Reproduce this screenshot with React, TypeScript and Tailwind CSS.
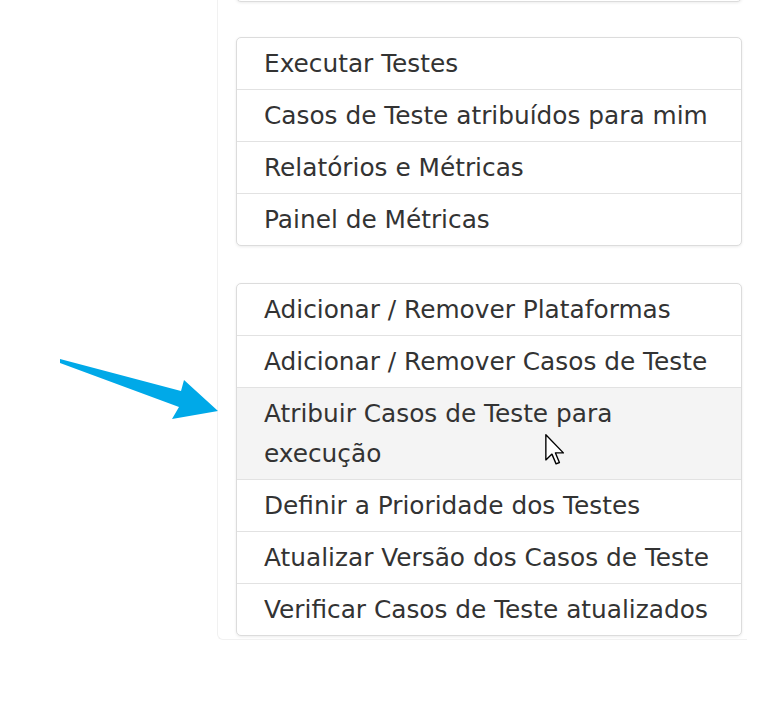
import React from 'react'

const TOP_ITEMS = [
  'Executar Testes',
  'Casos de Teste atribuídos para mim',
  'Relatórios e Métricas',
  'Painel de Métricas',
]

const PLAN_ITEMS = [
  'Adicionar / Remover Plataformas',
  'Adicionar / Remover Casos de Teste',
  'Atribuir Casos de Teste para execução',
  'Definir a Prioridade dos Testes',
  'Atualizar Versão dos Casos de Teste',
  'Verificar Casos de Teste atualizados',
]

function MenuCard({ items, hovered }: { items: string[]; hovered?: number }) {
  return (
    <div className="w-[506px] bg-white border border-[#dcdcdc] rounded-[5px] shadow-[0_1px_3px_rgba(0,0,0,0.08)] overflow-hidden">
      {items.map((label, i) => (
        <div
          key={label}
          className={`pl-[27px] pr-[18px] py-[5.5px] leading-[40px] text-[24.8px] text-[#333] ${i > 0 ? 'border-t border-[#e2e2e2]' : ''} ${hovered === i ? 'bg-[#f4f4f4]' : ''}`}
        >
          {label}
        </div>
      ))}
    </div>
  )
}

export default function App() {
  return (
    <div className="relative w-[760px] h-[706px] overflow-hidden bg-white font-['DejaVu_Sans',sans-serif]">
      <div className="ml-[217px] w-[530px] pb-[3px] border-l border-b border-[#f1f1f1] rounded-bl-md">
        {/* bottom of the card above */}
        <div className="ml-[18px] -mt-[38px] w-[506px] h-[40px] bg-white border border-[#dcdcdc] rounded-[5px] shadow-[0_1px_3px_rgba(0,0,0,0.08)]" />
        <div className="ml-[18px] mt-[35px]">
          <MenuCard items={TOP_ITEMS} />
        </div>
        <div className="ml-[18px] mt-[37px]">
          <MenuCard items={PLAN_ITEMS} hovered={2} />
        </div>
      </div>

      {/* blue pointer arrow */}
      <svg className="absolute left-0 top-0" width="760" height="706" viewBox="0 0 760 706">
        <polygon points="60,359 181,391 184,380 218,411 172,419 179,407 60,363" fill="#00a9e8" />
      </svg>

      {/* mouse cursor */}
      <svg className="absolute left-[545px] top-[434px]" width="20" height="32" viewBox="0 0 13 21">
        <path d="M0.5,0.5 L0.5,17 L4.5,13.2 L7.2,19.6 L9.4,18.7 L6.8,12.4 L12,12.4 Z" fill="#fff" stroke="#000" strokeWidth="0.9" strokeLinejoin="round" />
      </svg>
    </div>
  )
}
